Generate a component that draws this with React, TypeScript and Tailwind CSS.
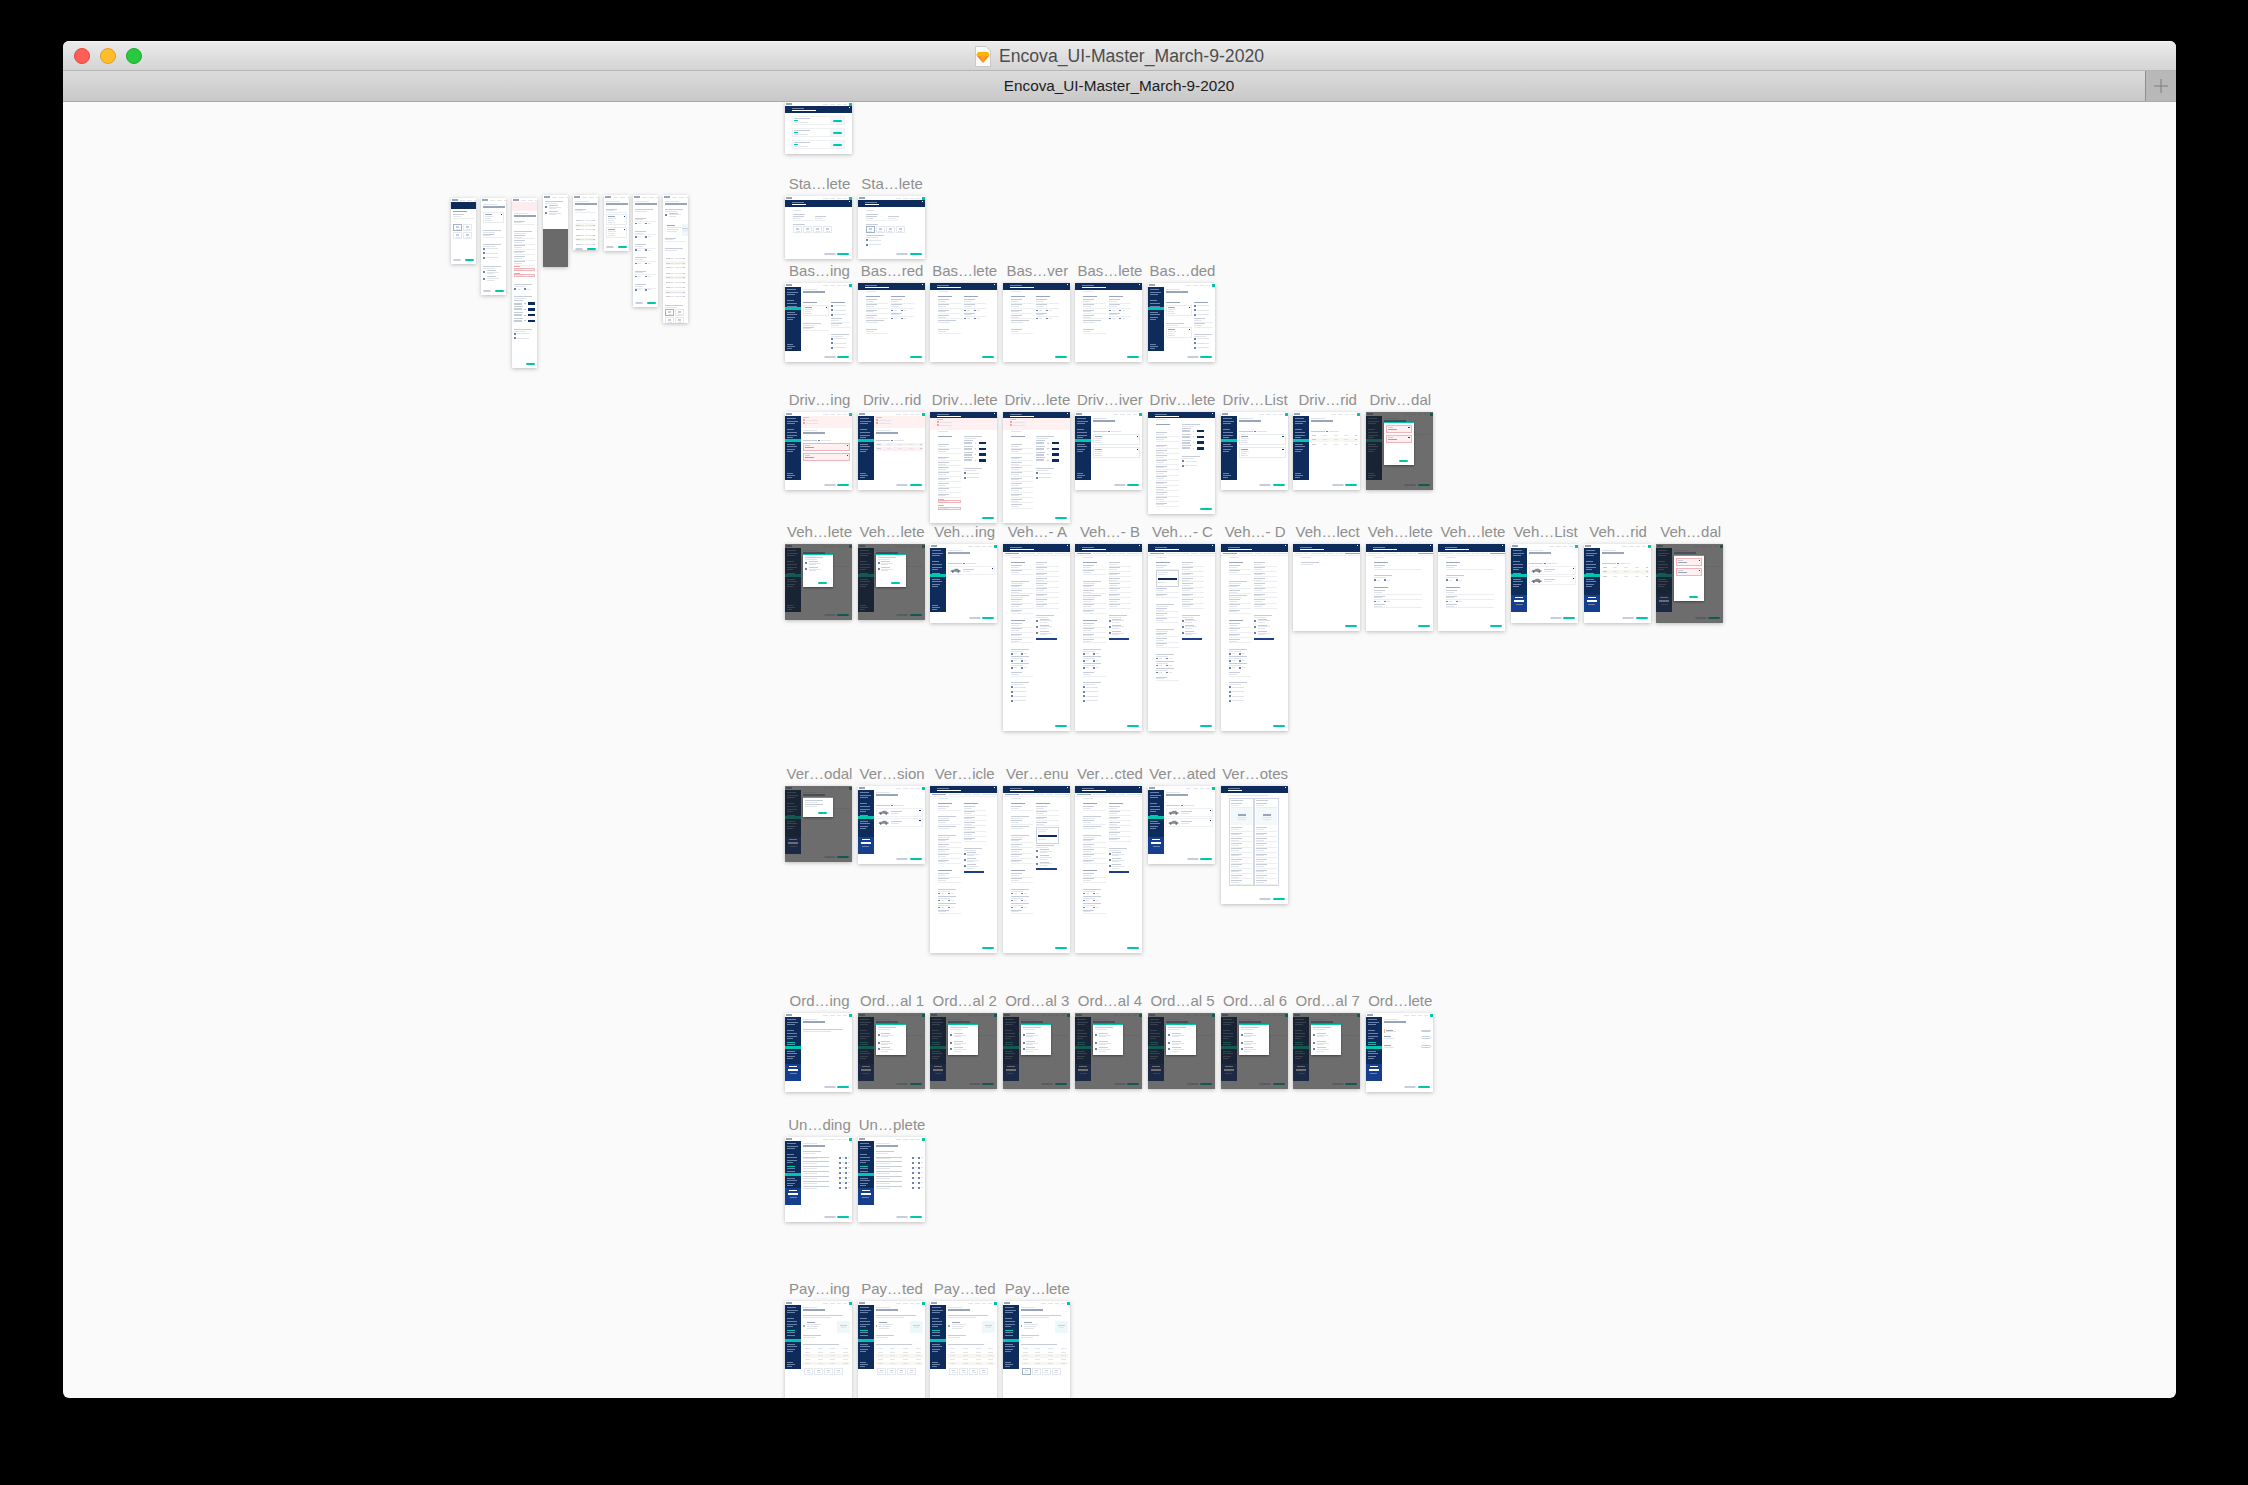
import type { ReactNode } from "react";

const X0 = 785 - 63;
const COL = 72.6;

const TONES = {
  dark: "bg-[#97a4ba]",
  mid: "bg-[#c6cdd9]",
  pale: "bg-[#e1e5eb]",
  navy: "bg-[#0d2c5c]",
  blue: "bg-[#1b3f8b]",
  side: "bg-[#6c82a8]",
  white: "bg-white",
  teal: "bg-[#00c7ac]",
  red: "bg-[#f0a3a9]",
};
type Tone = keyof typeof TONES;

function Bar({ w, tone = "mid", h = 1, className = "" }: { w: number | string; tone?: Tone; h?: number; className?: string }) {
  return <div className={`shrink-0 ${TONES[tone]} ${className}`} style={{ width: w, height: h }} />;
}

function Teal({ w = 12 }: { w?: number }) {
  return <Bar w={w} tone="teal" h={2.5} className="rounded-full" />;
}

function Nav() {
  return (
    <div className="flex h-[4px] shrink-0 items-center gap-[2px] bg-white pl-[1px]">
      <Bar w={6} tone="dark" h={1.5} />
      <div className="ml-auto flex items-center gap-[2px]">
        <Bar w={5} tone="pale" />
        <Bar w={5} tone="pale" />
        <Bar w={4} tone="pale" />
        <Bar w={4} tone="pale" />
        <div className="h-[3px] w-[3px] self-start bg-[#00c7ac]" />
      </div>
    </div>
  );
}

function Foot({ back = true }: { back?: boolean }) {
  return (
    <div className="mt-auto flex shrink-0 items-center justify-end gap-[1.5px] pb-[4px] pr-[3px]">
      {back && <div className="h-[2.5px] w-[12px] rounded-full border-[0.5px] border-[#c5cedc] bg-white" />}
      <Teal />
    </div>
  );
}

function Tile({ on = false }: { on?: boolean }) {
  return (
    <div className={`flex h-[7px] w-[9px] flex-col items-center justify-center gap-[1px] ${on ? "border border-[#a3b1c7]" : "border-[0.5px] border-[#e5e8ee]"}`}>
      <Bar w={3} tone="mid" h={1.5} />
      <Bar w={4} tone="pale" />
    </div>
  );
}

function Car() {
  return (
    <svg viewBox="0 0 24 10" className="h-[5px] w-[11px] shrink-0 opacity-80">
      <path d="M1 7 L3 4 L8 3.5 L11 1 L17 1 L20 4 L23 5 L23 8 L1 8 Z" fill="#6a6f7a" />
      <circle cx="6" cy="8" r="2" fill="#33363d" />
      <circle cx="18" cy="8" r="2" fill="#33363d" />
    </svg>
  );
}

// one character = one block of an artboard column
function Block({ k }: { k: string }) {
  switch (k) {
    case "d":
      return (
        <div className="mb-[4px] flex flex-col gap-[1px]">
          <Bar w={14} tone="pale" />
          <Bar w={22} tone="dark" h={1.5} />
        </div>
      );
    case "h":
      return <Bar w={14} tone="dark" className="mb-[2px]" />;
    case "f":
      return (
        <div className="mb-[1.2px] flex flex-col gap-[0.8px]">
          <Bar w={11} tone="mid" />
          <Bar w={8} tone="pale" />
          <div className="h-[0.5px] w-full bg-[#eceef2]" />
        </div>
      );
    case "s":
      return <div className="h-[2px]" />;
    case "S":
      return <div className="h-[5px]" />;
    case "q":
      return (
        <div className="mb-[1px] flex flex-col gap-[1px]">
          <Bar w={18} tone="mid" />
          <Bar w={12} tone="pale" />
        </div>
      );
    case "r":
      return (
        <div className="mb-[1.5px] flex items-center gap-[1px]">
          <Bar w={2} tone="side" h={1.5} />
          <Bar w={3} tone="pale" />
          <Bar w={2} tone="side" h={1.5} className="ml-[3px]" />
          <Bar w={3} tone="pale" />
        </div>
      );
    case "c":
      return (
        <div className="mb-[2.5px] flex items-center gap-[1px]">
          <Bar w={2} tone="side" h={2} />
          <Bar w={12} tone="pale" />
        </div>
      );
    case "o":
      return (
        <div className="mb-[2px] flex items-center gap-[1.5px]">
          <Bar w={2} tone="side" h={2} />
          <div className="flex flex-col gap-[0.6px]">
            <Bar w={9} tone="mid" />
            <Bar w={12} tone="pale" />
            <Bar w={7} tone="pale" />
          </div>
        </div>
      );
    case "B":
      return <Bar w="90%" tone="blue" h={2} className="mt-[0.5px]" />;
    case "m":
      return (
        <div className="mb-[1px] flex h-[17px] flex-col gap-[1px] border-[0.5px] border-[#ccd3df] px-[1px] py-[1px]">
          <Bar w={10} tone="pale" />
          <Bar w={8} tone="pale" />
          <Bar w="100%" tone="navy" h={2} className="mt-[2px]" />
          <Bar w={8} tone="pale" className="mt-[1px]" />
        </div>
      );
    case "n":
      return (
        <div className="mb-[1.5px] flex flex-col gap-[0.8px]">
          <Bar w={9} tone="mid" />
          <div className="flex items-center justify-between">
            <Bar w={8} tone="mid" h={2} />
            <Bar w={1.5} tone="mid" />
            <Bar w={7} tone="navy" h={2.5} />
          </div>
        </div>
      );
    case "e":
      return (
        <div className="mb-[2px] flex flex-col gap-[0.5px]">
          <Bar w={6} tone="red" />
          <div className="flex h-[3px] items-center border-[0.5px] border-[#f3b4b9] bg-[#fff3f3] pl-[1px]">
            <Bar w={8} tone="pale" />
          </div>
        </div>
      );
    case "t":
    case "T":
      return (
        <div className="flex gap-[1px]">
          <Tile on={k === "T"} />
          <Tile />
          <Tile />
          <Tile />
        </div>
      );
    case "2":
      return (
        <div className="mb-[1px] grid w-fit grid-cols-2 gap-[1px]">
          <Tile on />
          <Tile />
          <Tile />
          <Tile />
        </div>
      );
    case "C":
      return (
        <div className="mb-[1px] flex h-[9px] items-center gap-[2px] border-[0.5px] border-[#eef0f3] px-[1px]">
          <Car />
          <div className="flex flex-col gap-[1px]">
            <Bar w={11} tone="mid" />
            <Bar w={8} tone="pale" />
          </div>
          <Bar w={1.5} tone="navy" h={1.5} className="ml-auto self-start mt-[1px]" />
        </div>
      );
    case "K":
      return (
        <div className="mb-[2px] flex flex-col gap-[1px] border-[0.5px] border-[#e8ebf0] p-[1px]">
          <div className="flex justify-between">
            <Bar w={7} tone="dark" />
            <Bar w={1.5} tone="blue" />
          </div>
          <Bar w={8} tone="pale" />
          <Bar w={6} tone="pale" />
          <Bar w={7} tone="pale" />
        </div>
      );
    case "p":
      return (
        <div className="mb-[2px] flex h-[8px] flex-col gap-[1px] border-[0.5px] border-[#f3b4b9] bg-[#fff0f1] p-[1px]">
          <div className="flex justify-between">
            <Bar w={5} tone="mid" />
            <Bar w={1.5} tone="blue" />
          </div>
          <Bar w={9} tone="dark" />
        </div>
      );
    case "g":
      return (
        <div className="mb-[2px] flex flex-col gap-[1px]">
          {["bg-white", "bg-[#f7f6f1]", "bg-white"].map((bg, i) => (
            <div key={i} className={`flex h-[3.5px] items-center justify-between px-[1px] ${bg}`}>
              <Bar w={4} tone="mid" />
              <Bar w={4} tone="pale" />
              <Bar w={4} tone="pale" />
              <Bar w={4} tone="pale" />
              <Bar w={2} tone="mid" />
            </div>
          ))}
        </div>
      );
    case "x":
      return (
        <div className="mb-[2px] flex flex-col gap-[1px]">
          {[0, 1].map((i) => (
            <div key={i} className="flex h-[3.5px] items-center justify-between bg-[#ffeeee] px-[1px]">
              <Bar w={4} tone="mid" />
              <Bar w={4} tone="pale" />
              <Bar w={4} tone="pale" />
              <Bar w={4} tone="pale" />
              <Bar w={2} tone="mid" />
            </div>
          ))}
        </div>
      );
    case "Q":
      return (
        <div className="mb-[2.2px] flex items-center justify-between">
          <div className="flex flex-col gap-[0.8px]">
            <Bar w={26} tone="mid" />
            <Bar w={14} tone="pale" />
          </div>
          <div className="flex gap-[1px]">
            <Bar w={2} tone="side" h={1.5} />
            <Bar w={2} tone="pale" />
            <Bar w={2} tone="side" h={1.5} />
            <Bar w={2} tone="pale" />
          </div>
        </div>
      );
    case "b":
      return (
        <div className="mb-[2px] flex gap-[1px]">
          <Bar w={14} tone="mid" />
          <Bar w={2} tone="side" />
          <Bar w={10} tone="pale" />
        </div>
      );
    case "L":
      return (
        <div className="mb-[2px] flex items-center gap-[1px] border-l border-[#f3b88a] py-[1px] pl-[1px]">
          <div className="flex flex-col gap-[0.8px]">
            <Bar w={7} tone="dark" />
            <Bar w={10} tone="pale" />
          </div>
          <div className="ml-auto h-[2.5px] w-[10px] rounded-full border-[0.5px] border-[#c5cedc]" />
        </div>
      );
    case "l":
      return (
        <div className="mb-[4px] flex items-center gap-[1px] py-[1px]">
          <div className="flex flex-col gap-[0.8px]">
            <Bar w={7} tone="dark" />
            <Bar w={10} tone="pale" />
          </div>
          <div className="ml-auto h-[2.5px] w-[10px] rounded-full border-[0.5px] border-[#c5cedc]" />
        </div>
      );
    case "y":
      return (
        <div className="mb-[2px] flex h-[12px] items-stretch">
          <div className="mr-[1px] mt-[4px] h-[2px] w-[1.5px] bg-[#a4b0c8]" />
          <div className="flex flex-1 flex-col gap-[1px] p-[1px]">
            <Bar w={8} tone="dark" />
            <Bar w={14} tone="pale" />
            <Bar w={12} tone="pale" />
            <Bar w={10} tone="pale" />
          </div>
          <div className="flex w-[13px] flex-col items-center justify-center gap-[1px] bg-[#eef8fb]">
            <Bar w={7} tone="mid" />
            <Bar w={5} tone="pale" />
          </div>
        </div>
      );
    case "P":
      return (
        <div className="mb-[3px] flex flex-col gap-[0.5px]">
          <Bar w={36} tone="mid" className="mb-[2px]" />
          {["bg-white", "bg-white", "bg-[#f7f6f1]", "bg-white", "bg-[#f7f6f1]"].map((bg, i) => (
            <div key={i} className={`flex h-[3.2px] items-center justify-between px-[2px] ${bg}`}>
              <Bar w={5} tone="pale" />
              <Bar w={5} tone="pale" />
              <Bar w={5} tone="pale" />
              <Bar w={5} tone="pale" />
            </div>
          ))}
        </div>
      );
    case "u":
    case "U":
      return (
        <div className="flex gap-[1px] pl-[1px]">
          <Tile on={k === "U"} />
          <Tile />
          <Tile />
          <Tile />
        </div>
      );
    case "W":
      return (
        <div className="mb-[3px] flex flex-col gap-[1px]">
          <Bar w={40} tone="mid" />
          <Bar w={28} tone="pale" />
        </div>
      );
    default:
      return null;
  }
}

function Col({ s, className = "" }: { s: string; className?: string }) {
  return (
    <div className={`flex min-w-0 flex-col ${className}`}>
      {s.split("").map((k, i) => (
        <Block key={i} k={k} />
      ))}
    </div>
  );
}

function Sidebar({ band, promo = false }: { band: number; promo?: boolean }) {
  return (
    <div className="flex h-[64px] w-[16px] shrink-0 flex-col bg-[#0d2c5c]">
      <div className="flex flex-col gap-[1.5px] overflow-hidden pl-[2px] pt-[2px]" style={{ height: band - 4 }}>
        <Bar w={9} tone="side" />
        <Bar w={11} tone="side" />
        <Bar w={8} tone="side" />
        <Bar w={7} tone="side" className="mt-[3px]" />
        <Bar w={10} tone="side" className="mt-[1px]" />
        <Bar w={10} tone="side" />
        <Bar w={6} tone="side" />
        <Bar w={8} tone="teal" className="mt-[1px]" />
        <Bar w={8} tone="side" />
        <Bar w={8} tone="side" />
      </div>
      <div className="h-[2.5px] shrink-0 bg-[#00c7ac]" />
      <div className="flex flex-col gap-[1.5px] overflow-hidden pl-[2px] pt-[2px]">
        <Bar w={8} tone="side" />
        <Bar w={10} tone="side" />
        <Bar w={8} tone="side" />
        <Bar w={6} tone="side" />
      </div>
      {promo ? (
        <div className="mt-auto flex h-[17px] shrink-0 flex-col items-center gap-[1.5px] bg-[#153e8e] pt-[2px]">
          <Bar w={8} tone="white" />
          <Bar w={10} tone="white" h={2} />
          <Bar w={7} tone="side" className="mt-[1px]" />
        </div>
      ) : (
        <div className="mt-auto flex flex-col gap-[1px] pb-[2px] pl-[2px]">
          <Bar w={6} tone="side" />
          <Bar w={8} tone="side" />
          <Bar w={5} tone="side" />
        </div>
      )}
    </div>
  );
}

function Side({ band, promo, foot = "both", children }: { band: number; promo?: boolean; foot?: "both" | "next" | "none"; children: ReactNode }) {
  return (
    <>
      <Nav />
      <div className="flex flex-1">
        <Sidebar band={band} promo={promo} />
        <div className="flex min-w-0 flex-1 flex-col pl-[2px]">
          <div className="flex-1 pr-[2px]">{children}</div>
          {foot !== "none" && <Foot back={foot === "both"} />}
        </div>
      </div>
    </>
  );
}

function Head({ h = 7, wide = true }: { h?: number; wide?: boolean }) {
  return (
    <div className="flex shrink-0 items-center bg-[#0d2c5c] pl-[7px] pr-[2px]" style={{ height: h }}>
      <div className="flex flex-col gap-[1px]">
        <Bar w={12} tone="side" />
        <Bar w={wide ? 24 : 14} tone="white" />
      </div>
      <Bar w={1} tone="white" className="ml-auto self-start mt-[1px]" />
    </div>
  );
}

function Tabs({ on = 0 }: { on?: number }) {
  return (
    <div className="flex h-[4px] shrink-0 items-center gap-[2px] border-b-[0.5px] border-[#edf0f4] pl-[2px]">
      {[14, 14, 7, 7, 15].map((w, i) => (
        <Bar key={i} w={w} tone={i === on ? "dark" : "pale"} />
      ))}
    </div>
  );
}

function Banner({ flush = false }: { flush?: boolean }) {
  return (
    <div className={`flex h-[12px] shrink-0 flex-col gap-[1px] bg-[#fff0f1] pt-[1px] ${flush ? "-ml-[2px] -mr-[2px] pl-[2px]" : "pl-[7px]"}`}>
      <Bar w={6} tone="mid" />
      <div className="flex items-center gap-[1px]">
        <Bar w={2} tone="red" h={2} />
        <Bar w={12} tone="pale" />
      </div>
      <div className="flex items-center gap-[1px]">
        <Bar w={2} tone="red" h={2} />
        <Bar w={12} tone="pale" />
      </div>
    </div>
  );
}

// full page board: navy header, optional tabs/banner, two columns
function Page({ a, b = "", tabs = false, banner = false, on = 0, y = 4, h = 7 }: { a: string; b?: string; tabs?: boolean; banner?: boolean; on?: number; y?: number; h?: number }) {
  return (
    <>
      <Head h={h} />
      {tabs && <Tabs on={on} />}
      {banner && <Banner />}
      <div className="flex flex-1 flex-col">
        <div className="pl-[8px] pt-[1px]">
          <Bar w={10} tone="pale" />
        </div>
        <div className="flex gap-[3px] pl-[8px] pr-[11px]" style={{ paddingTop: y }}>
          <Col s={a} className="flex-1" />
          {b && <Col s={b} className="flex-1" />}
        </div>
        <Foot back={false} />
      </div>
    </>
  );
}

function Modal({ top, h, teal = true, s }: { top: number; h: number; teal?: boolean; s: string }) {
  return (
    <div className="absolute left-[18px] w-[30px] overflow-hidden border-t border-[#00c7ac] bg-white px-[2px] pt-[2px] shadow-[0_1px_2px_rgba(0,0,0,0.4)]" style={{ top, height: h }}>
      <Col s={s} />
      {teal && (
        <div className="absolute bottom-[3px] left-[15px]">
          <Bar w={9} tone="teal" h={2.5} className="rounded-full" />
        </div>
      )}
    </div>
  );
}

function Dim({ children }: { children: ReactNode }) {
  return <div className="absolute inset-0 bg-[#1f1f1f]/65">{children}</div>;
}

const LONG_A = "hffSqffqfffShffffSqrqrqrsfSqcccc";
const LONG_B = "fffffffffSqoooB";
const LONG_MENU = "hfmffSqfffSqfffSqrqrqrsf";
const VER_B = "hfffffffSqoooB";
const VER_A = "hfSqfqSqfffffShffSqrqrqrf";
const VER_MENU_B = "hffffmqoooB";
const DRV_A = "hSffsffffffff";
const DRV_B = "qnnnnSqcc";
const ORD_M = "qsosoo";

type B = { c: number; label?: string; h: number; body: ReactNode };
type Row = { top: number; boards: B[] };

const SideDim = ({ band, promo, top, h, s, teal = true, foot = "both" }: { band: number; promo?: boolean; top: number; h: number; s: string; teal?: boolean; foot?: "both" | "next" | "none" }) => (
  <>
    <Side band={band} promo={promo} foot={foot}>
      <div className="pt-[2px]">
        <Col s="dSf" />
      </div>
    </Side>
    <Dim>
      <Modal top={top} h={h} s={s} teal={teal} />
    </Dim>
  </>
);

const VehSide = ({ s, promo }: { s: string; promo?: boolean }) => (
  <Side band={30} promo={promo}>
    <div className="pt-[2px]">
      <Col s={s} />
    </div>
  </Side>
);

const Start = ({ s }: { s: string }) => (
  <>
    <Nav />
    <Head h={7} wide={false} />
    <div className="flex flex-1 flex-col pl-[8px] pt-[3px]">
      <Bar w={8} tone="pale" className="mb-[3px]" />
      <Bar w={12} tone="mid" className="mb-[1px]" />
      <div className="mb-[3px] flex w-[32px] gap-[2px]">
        <Col s="f" className="flex-1" />
        <Col s="f" className="w-[10px]" />
      </div>
      <Bar w={12} tone="mid" className="mb-[1px]" />
      <Col s={s} />
      <Foot />
    </div>
  </>
);

const ROWS: Row[] = [
  {
    top: 196,
    boards: [
      { c: 0, label: "Sta…lete", h: 63, body: <Start s="t" /> },
      { c: 1, label: "Sta…lete", h: 63, body: <Start s="Tsqcc" /> },
    ],
  },
  {
    top: 283,
    boards: [
      { c: 0, label: "Bas…ing", h: 79, body: <Side band={24}><div className="pt-[2px]"><Col s="dS" /><div className="flex gap-[2px]"><Col s="hKSqf" className="flex-1" /><Col s="hcccffSqccc" className="w-[19px]" /></div></div></Side> },
      { c: 1, label: "Bas…red", h: 79, body: <Page a="hffffqSf" b="hffrfr" /> },
      { c: 2, label: "Bas…lete", h: 79, body: <Page a="hffffqSf" b="hffrfr" /> },
      { c: 3, label: "Bas…ver", h: 79, body: <Page a="hffffqSf" b="hffrfr" /> },
      { c: 4, label: "Bas…lete", h: 79, body: <Page a="hffffqSf" b="hffrfr" /> },
      { c: 5, label: "Bas…ded", h: 79, body: <Side band={24}><div className="pt-[2px]"><Col s="dS" /><div className="flex gap-[2px]"><Col s="hKSqK" className="flex-1" /><Col s="hcccffSqccc" className="w-[19px]" /></div></div></Side> },
    ],
  },
  {
    top: 412,
    boards: [
      { c: 0, label: "Driv…ing", h: 78, body: <Side band={27}><Banner flush /><div className="pt-[2px]"><Col s="dsbpp" /></div></Side> },
      { c: 1, label: "Driv…rid", h: 78, body: <Side band={27}><Banner flush /><div className="pt-[2px]"><Col s="dsbx" /></div></Side> },
      { c: 2, label: "Driv…lete", h: 111, body: <Page banner h={6} a={DRV_A + "ee"} b={DRV_B} /> },
      { c: 3, label: "Driv…lete", h: 111, body: <Page banner h={6} a={DRV_A + "ff"} b={DRV_B} /> },
      { c: 4, label: "Driv…iver", h: 78, body: <Side band={27}><div className="pt-[2px]"><Col s="dSbKK" /></div></Side> },
      { c: 5, label: "Driv…lete", h: 102, body: <Page h={6} a={DRV_A + "ffff"} b={DRV_B} /> },
      { c: 6, label: "Driv…List", h: 78, body: <Side band={27}><div className="pt-[2px]"><Col s="dSbKK" /></div></Side> },
      { c: 7, label: "Driv…rid", h: 78, body: <Side band={27}><div className="pt-[2px]"><Col s="dSbg" /></div></Side> },
      { c: 8, label: "Driv…dal", h: 78, body: <SideDim band={27} top={10} h={43} s="pp" /> },
    ],
  },
  {
    top: 544,
    boards: [
      { c: 0, label: "Veh…lete", h: 76, body: <SideDim band={30} top={10} h={33} s="qoo" /> },
      { c: 1, label: "Veh…lete", h: 76, body: <SideDim band={30} top={10} h={33} s="qoo" /> },
      { c: 2, label: "Veh…ing", h: 79, body: <VehSide s="dSbC" /> },
      { c: 3, label: "Veh…- A", h: 187, body: <Page tabs a={LONG_A} b={LONG_B} h={8} /> },
      { c: 4, label: "Veh…- B", h: 187, body: <Page tabs a={LONG_A} b={LONG_B} h={8} /> },
      { c: 5, label: "Veh…- C", h: 187, body: <Page tabs a={LONG_MENU} b={LONG_B} h={8} /> },
      { c: 6, label: "Veh…- D", h: 187, body: <Page tabs a={LONG_A} b={LONG_B} h={8} /> },
      { c: 7, label: "Veh…lect", h: 87, body: <Page tabs on={4} a="qs" h={8} /> },
      { c: 8, label: "Veh…lete", h: 87, body: <Page tabs on={4} a="hfSqrShffrf" h={8} /> },
      { c: 9, label: "Veh…lete", h: 87, body: <Page tabs on={4} a="hfSqrShffrf" h={8} /> },
      { c: 10, label: "Veh…List", h: 79, body: <VehSide promo s="dSbCC" /> },
      { c: 11, label: "Veh…rid", h: 79, body: <VehSide promo s="dSbg" /> },
      { c: 12, label: "Veh…dal", h: 79, body: <SideDim band={30} promo top={11} h={46} s="pp" /> },
    ],
  },
  {
    top: 786,
    boards: [
      { c: 0, label: "Ver…odal", h: 76, body: <SideDim band={30} promo top={11} h={20} s="qq" /> },
      { c: 1, label: "Ver…sion", h: 78, body: <VehSide promo s="dSbCC" /> },
      { c: 2, label: "Ver…icle", h: 167, body: <Page tabs a={VER_A} b={VER_B} h={7} /> },
      { c: 3, label: "Ver…enu", h: 167, body: <Page tabs a={VER_A} b={VER_MENU_B} h={7} /> },
      { c: 4, label: "Ver…cted", h: 167, body: <Page tabs a={VER_A} b={VER_B} h={7} /> },
      { c: 5, label: "Ver…ated", h: 78, body: <VehSide promo s="dSbCC" /> },
      {
        c: 6,
        label: "Ver…otes",
        h: 118,
        body: (
          <>
            <Head h={7} wide={false} />
            <div className="flex flex-1 flex-col pt-[2px]">
              <div className="pl-[7px]"><Bar w={40} tone="pale" /></div>
              <div className="mx-auto mt-[2px] flex w-[50px]">
                {[0, 1].map((i) => (
                  <div key={i} className="w-[25px] border-[0.5px] border-[#d3d9e4] px-[1px] pt-[1px]">
                    <Bar w={12} tone="mid" className="mb-[2px]" />
                    <Col s="f" />
                    <div className="mb-[2px] flex h-[17px] flex-col items-center justify-center gap-[1px] bg-[#f3f8fa]">
                      <Bar w={8} tone="dark" h={1.5} />
                      <Bar w={10} tone="pale" />
                      <Bar w={8} tone="pale" />
                    </div>
                    <Col s="fffffffffff" />
                  </div>
                ))}
              </div>
              <Foot />
            </div>
          </>
        ),
      },
    ],
  },
  {
    top: 1013,
    boards: [
      { c: 0, label: "Ord…ing", h: 79, body: <Side band={33} promo><div className="pt-[2px]"><Col s="dsW" /></div></Side> },
      ...[1, 2, 3, 4, 5, 6, 7].map((c) => ({
        c,
        label: `Ord…al ${c}`,
        h: 76,
        body: <SideDim band={33} promo top={11} h={31} teal={false} s={ORD_M} />,
      })),
      { c: 8, label: "Ord…lete", h: 79, body: <Side band={33} promo><div className="pt-[2px]"><Col s="dsLll" /></div></Side> },
    ],
  },
  {
    top: 1137,
    boards: [
      { c: 0, label: "Un…ding", h: 85, body: <Side band={36} promo><div className="pt-[2px]"><Col s="dqsQQQQQQQ" /></div></Side> },
      { c: 1, label: "Un…plete", h: 85, body: <Side band={36} promo><div className="pt-[2px]"><Col s="dqsQQQQQQQ" /></div></Side> },
    ],
  },
  {
    top: 1301,
    boards: [
      { c: 0, label: "Pay…ing", h: 100, body: <Side band={38} foot="none"><div className="pt-[2px]"><Col s="dWyqSPu" /></div></Side> },
      { c: 1, label: "Pay…ted", h: 100, body: <Side band={38} foot="none"><div className="pt-[2px]"><Col s="dWyqSPu" /></div></Side> },
      { c: 2, label: "Pay…ted", h: 100, body: <Side band={38} foot="none"><div className="pt-[2px]"><Col s="dWyqSPu" /></div></Side> },
      { c: 3, label: "Pay…lete", h: 100, body: <Side band={38} foot="none"><div className="pt-[2px]"><Col s="dWyqSPU" /></div></Side> },
    ],
  },
];

const MINI = [
  { x: 451, y: 198, h: 66, navy: true, s: "hfS2" },
  { x: 481, y: 198, h: 97, s: "dKSqfSqcccSqoo" },
  { x: 512, y: 198, h: 170, pink: true, s: "dfSqffffffeeSqrSqnnnnSqcc", end: true },
  { x: 543, y: 195, h: 72, dim: true, s: "dq" },
  { x: 573, y: 195, h: 55, s: "dfSgg" },
  { x: 604, y: 195, h: 56, s: "dfKK" },
  { x: 633, y: 195, h: 112, s: "dqSfrSfrSfrSfrSfrSfr" },
  { x: 663, y: 195, h: 128, s: "dqoSyfSqSgggSq2" },
];

function Mini({ x, y, h, s, navy, dim, end, pink }: { x: number; y: number; h: number; s: string; navy?: boolean; dim?: boolean; end?: boolean; pink?: boolean }) {
  return (
    <div className="absolute w-[25px] bg-white shadow-[0_1px_4px_rgba(0,0,0,0.25)]" style={{ left: x - 63, top: y - 102, height: h }}>
      <div className="flex h-full flex-col overflow-hidden blur-[0.6px]">
        <Nav />
        {navy && <div className="h-[7px] shrink-0 bg-[#0d2c5c]" />}
        {pink && <div className="h-[9px] shrink-0 bg-[#ffecee]" />}
        <div className="flex flex-1 flex-col overflow-hidden px-[2px] pt-[2px]">
          <Col s={s} />
          <div className="mt-auto flex justify-between pb-[3px]">
            {!end && <div className="h-[2.5px] w-[8px] rounded-full border-[0.5px] border-[#c5cedc]" />}
            <Bar w={9} tone="teal" h={2.5} className="ml-auto rounded-full" />
          </div>
        </div>
      </div>
      {dim && (
        <div className="absolute inset-x-0 bottom-0 top-[4px] bg-[#6a6a6a]">
          <div className="h-[30px] bg-white px-[2px] pt-[2px] blur-[0.5px]">
            <Col s="qoo" />
          </div>
        </div>
      )}
    </div>
  );
}

function Board({ left, top, h, label, children }: { left: number; top: number; h: number; label?: string; children: ReactNode }) {
  return (
    <div className="absolute flex w-[67px] flex-col items-center" style={{ left, top: top - 20 }}>
      <div className="flex h-[20px] w-full items-start justify-center whitespace-nowrap pl-[2px] text-[15px] leading-[16px] text-[#8f8f8f]">{label}</div>
      <div className="w-full bg-white shadow-[0_1px_4px_rgba(0,0,0,0.25)]" style={{ height: h }}>
        <div className="relative flex h-full flex-col overflow-hidden blur-[0.45px]">{children}</div>
      </div>
    </div>
  );
}

function SketchIcon() {
  return (
    <svg viewBox="0 0 16 21" className="h-[21px] w-[16px]">
      <path d="M.5 .5 H11 L15.5 5 V20.5 H.5 Z" fill="#fbfbfb" stroke="#c9c9c9" />
      <path d="M3 6 H13 L15 9.5 H1 Z" fill="#fdb300" transform="translate(0 0)" />
      <path d="M1.5 9.5 H14.5 L8 17 Z" fill="#f5891f" />
      <path d="M5 9.5 H11 L8 17 Z" fill="#fba223" />
    </svg>
  );
}

export default function App() {
  return (
    <div className="h-[1485px] w-[2248px] overflow-hidden bg-black pl-[63px] pt-[41px] font-['Liberation_Sans',Arial,sans-serif]">
      <div className="flex h-[1357px] w-[2113px] flex-col overflow-hidden rounded-[6px] bg-[#fafafa]">
        <div className="relative flex h-[30px] shrink-0 items-center justify-center gap-[8px] border-b border-t border-b-[#b5b5b5] border-t-[#f5f5f5] bg-gradient-to-b from-[#ebebeb] to-[#d4d4d4]">
          <div className="absolute left-[11px] flex gap-[10px]">
            <div className="h-[16px] w-[16px] rounded-full border border-[#e2463f] bg-[#ff5f57]" />
            <div className="h-[16px] w-[16px] rounded-full border border-[#dea123] bg-[#ffbd2e]" />
            <div className="h-[16px] w-[16px] rounded-full border border-[#1aab29] bg-[#28c840]" />
          </div>
          <SketchIcon />
          <span className="text-[17.6px] text-[#4d4d4d]">Encova_UI-Master_March-9-2020</span>
        </div>
        <div className="flex h-[31px] shrink-0 border-b border-[#a9a9a9] bg-gradient-to-b from-[#dcdcdc] to-[#c8c8c8]">
          <div className="flex flex-1 items-center justify-center pl-[30px] pt-[1px] text-[15.3px] text-[#1c1c1c]">Encova_UI-Master_March-9-2020</div>
          <div className="flex w-[31px] items-center justify-center border-l border-[#8f8f8f] bg-[#b8b8b8]">
            <svg viewBox="0 0 16 16" className="h-[16px] w-[16px]">
              <path d="M8 1 V15 M1 8 H15" stroke="#7d7d7d" strokeWidth="1" />
            </svg>
          </div>
        </div>
        <div className="relative flex-1 overflow-hidden">
          <div className="absolute w-[67px] bg-white shadow-[0_1px_4px_rgba(0,0,0,0.25)]" style={{ left: X0, top: 0, height: 52 }}>
            <div className="flex h-full flex-col overflow-hidden blur-[0.45px]">
              <Nav />
              <Head h={7} />
              <div className="flex flex-col gap-[3px] px-[7px] pt-[3px]">
                {[0, 1, 2].map((i) => (
                  <div key={i} className="flex h-[9px] items-center border-[0.5px] border-[#eef0f4] pl-[1px]">
                    <div className="flex flex-col gap-[0.8px]">
                      <Bar w={16} tone="mid" />
                      <Bar w={4} tone="teal" />
                      <Bar w={14} tone="pale" />
                    </div>
                    <div className="ml-auto flex h-full w-[14px] items-center justify-center bg-[#eef8fb]">
                      <Bar w={9} tone="teal" h={2} className="rounded-full" />
                    </div>
                  </div>
                ))}
              </div>
            </div>
          </div>
          {MINI.map((m) => (
            <Mini key={m.x} {...m} />
          ))}
          {ROWS.map((row) =>
            row.boards.map((b) => (
              <Board key={`${row.top}-${b.c}`} left={X0 + b.c * COL} top={row.top - 102} h={b.h} label={b.label}>
                {b.body}
              </Board>
            )),
          )}
        </div>
      </div>
    </div>
  );
}
